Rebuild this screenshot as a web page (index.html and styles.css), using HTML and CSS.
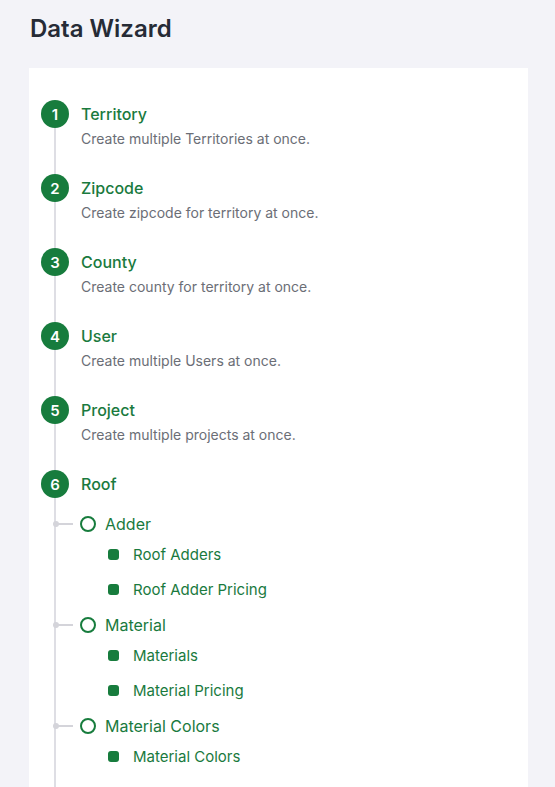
FILE: index.html
```html
<!DOCTYPE html>
<html lang="en">
<head>
    <meta charset="UTF-8">
    <meta name="viewport" content="width=device-width, initial-scale=1.0">
    <title>Data Wizard</title>
    <link rel="stylesheet" href="styles.css">
</head>
<body>

    <h1 class="page-title">Data Wizard</h1>

    <div class="card">
        <ol class="steps">
            <li class="step">
                <span class="step-num">1</span>
                <div class="step-body">
                    <div class="step-title">Territory</div>
                    <div class="step-desc">Create multiple Territories at once.</div>
                </div>
            </li>
            <li class="step">
                <span class="step-num">2</span>
                <div class="step-body">
                    <div class="step-title">Zipcode</div>
                    <div class="step-desc">Create zipcode for territory at once.</div>
                </div>
            </li>
            <li class="step">
                <span class="step-num">3</span>
                <div class="step-body">
                    <div class="step-title">County</div>
                    <div class="step-desc">Create county for territory at once.</div>
                </div>
            </li>
            <li class="step">
                <span class="step-num">4</span>
                <div class="step-body">
                    <div class="step-title">User</div>
                    <div class="step-desc">Create multiple Users at once.</div>
                </div>
            </li>
            <li class="step">
                <span class="step-num">5</span>
                <div class="step-body">
                    <div class="step-title">Project</div>
                    <div class="step-desc">Create multiple projects at once.</div>
                </div>
            </li>
            <li class="step step-open">
                <span class="step-num">6</span>
                <div class="step-body">
                    <div class="step-title">Roof</div>
                </div>
            </li>
        </ol>

        <ul class="groups">
            <li class="group">
                <div class="group-head"><span class="ring"></span>Adder</div>
                <ul class="items">
                    <li class="item"><span class="dot"></span>Roof Adders</li>
                    <li class="item"><span class="dot"></span>Roof Adder Pricing</li>
                </ul>
            </li>
            <li class="group">
                <div class="group-head"><span class="ring"></span>Material</div>
                <ul class="items">
                    <li class="item"><span class="dot"></span>Materials</li>
                    <li class="item"><span class="dot"></span>Material Pricing</li>
                </ul>
            </li>
            <li class="group">
                <div class="group-head"><span class="ring"></span>Material Colors</div>
                <ul class="items">
                    <li class="item"><span class="dot"></span>Material Colors</li>
                </ul>
            </li>
        </ul>
    </div>

</body>
</html>
```

FILE: styles.css
```css
body {
    font-family: Inter, "Noto Sans", Arial, sans-serif;
    margin: 0;
    padding: 0 27px 0 29px;
    background-color: #f3f3f8;
    height: 787px;
    overflow: hidden;
}
.page-title {
    margin: 0;
    padding: 14px 0 0 1px;
    height: 68px;
    box-sizing: border-box;
    font-size: 24px;
    font-weight: 600;
    color: #262b36;
}
.card {
    background: white;
    padding: 32px 12px 40px;
    min-height: 800px;
    position: relative;
}
/* vertical rail through all steps */
.card::before {
    content: "";
    position: absolute;
    left: 25px;
    top: 60px;
    bottom: 0;
    width: 2px;
    background: #dedee4;
}
.steps, .groups, .items {
    list-style: none;
    margin: 0;
    padding: 0;
}
.step {
    display: flex;
    gap: 12px;
    height: 74px;
    position: relative;
}
.step-open {
    height: 28px;
}
.step-num {
    flex: none;
    width: 28px;
    height: 28px;
    border-radius: 50%;
    background: #177c3d;
    color: white;
    font-size: 15px;
    font-weight: 600;
    display: flex;
    align-items: center;
    justify-content: center;
    position: relative;
    z-index: 1;
}
.step-title {
    font-size: 16px;
    font-weight: 500;
    line-height: 28px;
    color: #1a7a3e;
}
.step-desc {
    font-size: 14px;
    line-height: 20px;
    margin-top: 1px;
    color: #6b6e76;
}
.groups {
    padding-left: 39px;
    padding-top: 13px;
}
.group-head {
    display: flex;
    align-items: center;
    gap: 9px;
    height: 26px;
    font-size: 16px;
    color: #1a7a3e;
    position: relative;
}
/* branch from rail to ring */
.group-head::before {
    content: "";
    position: absolute;
    left: -25px;
    top: 12px;
    width: 18px;
    height: 2px;
    background: #d4d4da;
}
.group-head::after {
    content: "";
    position: absolute;
    left: -27px;
    top: 10px;
    width: 6px;
    height: 6px;
    border-radius: 50%;
    background: #d4d4da;
}
.ring {
    width: 12px;
    height: 12px;
    border: 2px solid #177c3d;
    border-radius: 50%;
}
.items {
    padding: 0 0 5px 28px;
}
.item {
    display: flex;
    align-items: center;
    gap: 14px;
    height: 35px;
    font-size: 15px;
    color: #1a7a3e;
}
.dot {
    width: 11px;
    height: 11px;
    border-radius: 3px;
    background: #177c3d;
}
```
